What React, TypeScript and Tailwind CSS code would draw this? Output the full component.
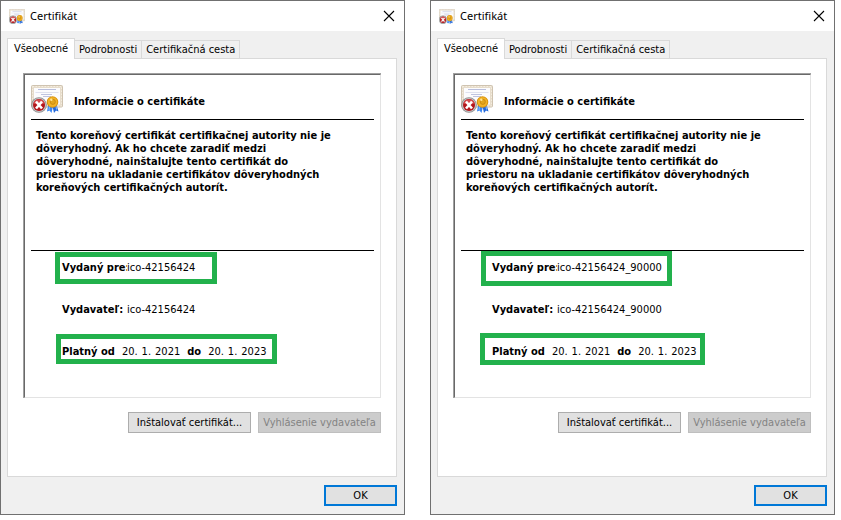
type Certificate = {
  id: string
  name: string
  issuedMark: string
  validMark: string
}

const certificates: Certificate[] = [
  {
    id: 'left',
    name: 'ico-42156424',
    issuedMark: '-left-[7px] -top-[9px] h-8 w-[162px]',
    validMark: '-left-[6px] -top-[11px] h-[30px] w-[221px]',
  },
  {
    id: 'right',
    name: 'ico-42156424_90000',
    issuedMark: '-left-[11px] -top-[10px] h-[35px] w-[191px]',
    validMark: '-left-3 -top-3 h-8 w-[225px]',
  },
]

const tabs = ['Podrobnosti', 'Certifikačná cesta']

function CertificateIcon({ className }: { className: string }) {
  return (
    <svg viewBox="0 0 32 28" preserveAspectRatio="none" className={className} aria-hidden="true">
      <rect x="0.5" y="0.5" width="31" height="21.500" rx="1" fill="#e6dccb" stroke="#cfc3b0" />
      <rect x="1.500" y="1.500" width="29" height="19.500" fill="none" stroke="#f5eee0" strokeDasharray="1.500 1.500" />
      <rect x="3" y="3" width="26" height="16.500" fill="#fcfcfe" />
      <path d="M7 4.500h18" stroke="#b9bedb" />
      <path d="M4.500 7.500h23" stroke="#dfe1ee" />
      <path d="M10 9.500h11M12 11.500h8" stroke="#bfc4e0" />
      <path d="M17.500 18l-1.500 8.500 2.500-1 2 2.500 2-9z" fill="#3b86f2" />
      <path d="M25 18l2.500 8.500-2.500-1-2 2.500-2-9z" fill="#2468da" />
      <path d="M18.500 21l-0.500 4M25 21l0.500 3.500" stroke="#8fc0ff" />
      <circle cx="21.500" cy="17" r="5.800" fill="#d9930f" />
      <circle cx="21.500" cy="17" r="4.800" fill="#f2b327" />
      <circle cx="21.800" cy="16.800" r="2.600" fill="#e3a51c" stroke="#b87908" strokeWidth="0.6" />
      <circle cx="20.300" cy="14.800" r="1.200" fill="#ffe391" />
      <circle cx="8" cy="20" r="7.800" fill="#8e8e8e" />
      <circle cx="8" cy="20" r="7" fill="#c4c4c4" />
      <circle cx="8" cy="20" r="6" fill="#b3161b" />
      <path d="M2.500 18.500a5.700 5.700 0 0 1 11 0q-5.500 2-11 0z" fill="#d4494c" />
      <path d="M5 16.500l6 7M11 16.500l-6 7" stroke="#fff" strokeWidth="2.600" />
    </svg>
  )
}

function DateParts({ parts }: { parts: string[] }) {
  return (
    <dd className="flex gap-1">
      {parts.map((part) => (
        <span key={part}>{part}</span>
      ))}
    </dd>
  )
}

function CertificateDialog({ cert }: { cert: Certificate }) {
  return (
    <section className="min-w-0 flex-1 border border-[#707070] bg-[#f0f0f0]">
      {/* Title bar */}
      <header className="flex h-[30px] items-center bg-white pr-[9px] pl-2">
        <CertificateIcon className="h-[15px] w-4" />
        <h1 className="ml-[5px] flex-1 font-['Noto_Sans',sans-serif] text-[11px] leading-4">Certifikát</h1>
        <button type="button" aria-label="Zavrieť">
          <svg viewBox="0 0 12 12" className="h-3 w-3" aria-hidden="true">
            <path d="M1 1l10 10M11 1L1 11" stroke="#000" strokeWidth="1.1" />
          </svg>
        </button>
      </header>

      <div className="pt-[7px] pr-[7px] pb-2 pl-[6px]">
        {/* Tabs */}
        <div role="tablist" className="flex items-end">
          <button
            type="button"
            role="tab"
            aria-selected="true"
            className="relative z-10 -mb-px h-[21px] w-[68px] border border-b-0 border-[#d9d9d9] bg-white pb-px"
          >
            Všeobecné
          </button>
          {tabs.map((tab) => (
            <button
              key={tab}
              type="button"
              role="tab"
              aria-selected="false"
              className="h-[18px] border-t border-r border-[#d9d9d9] px-1"
            >
              {tab}
            </button>
          ))}
        </div>

        <div className="border border-[#d9d9d9] bg-white px-[15px] pt-[14px] pb-[43px]">
          {/* Certificate sheet */}
          <div className="border-t border-l border-t-[#a0a0a0] border-l-[#a0a0a0]">
            <div className="border border-t-[#696969] border-r-[#e3e3e3] border-b-[#e3e3e3] border-l-[#696969] pr-[6px] pb-[38px] pl-[6px]">
              <div className="flex h-[45px] items-center border-b border-black pt-1">
                <CertificateIcon className="h-7 w-8" />
                <h2 className="ml-[11px] pt-[6px] font-bold">Informácie o certifikáte</h2>
              </div>
              <div className="h-[131px] border-b border-black pt-[9px] pl-[5px]">
                <p className="max-w-[305px] leading-[13px] font-bold">
                  Tento koreňový certifikát certifikačnej autority nie je dôveryhodný. Ak ho chcete zaradiť medzi
                  dôveryhodné, nainštalujte tento certifikát do priestoru na ukladanie certifikátov dôveryhodných
                  koreňových certifikačných autorít.
                </p>
              </div>

              <dl className="flex flex-col gap-7 pt-[10px] pl-[31px] whitespace-nowrap">
                <div className="relative flex">
                  <dt className="w-[65px] font-bold">Vydaný pre:</dt>
                  <dd className="relative bg-white">{cert.name}</dd>
                  <span className={`absolute border-[5px] border-[#22b14c] ${cert.issuedMark}`} />
                </div>
                <div className="flex">
                  <dt className="w-[65px] font-bold">Vydavateľ:</dt>
                  <dd>{cert.name}</dd>
                </div>
                <div className="relative flex gap-[7px]">
                  <dt className="font-bold">Platný od</dt>
                  <DateParts parts={['20.', '1.', '2021']} />
                  <dt className="font-bold">do</dt>
                  <DateParts parts={['20.', '1.', '2023']} />
                  <span className={`absolute border-[5px] border-[#22b14c] ${cert.validMark}`} />
                </div>
              </dl>
            </div>
          </div>

          <div className="mt-[14px] flex justify-end gap-[7px]">
            <button type="button" className="h-[21px] w-[123px] border border-[#adadad] bg-[#e1e1e1]">
              Inštalovať certifikát...
            </button>
            <button
              type="button"
              disabled
              className="h-[21px] w-[123px] border border-[#bfbfbf] bg-[#ccc] text-[#838383]"
            >
              Vyhlásenie vydavateľa
            </button>
          </div>
        </div>

        <div className="mt-2 flex justify-end">
          <button type="button" className="h-[21px] w-[73px] border-2 border-[#0078d7] bg-[#e1e1e1]">
            OK
          </button>
        </div>
      </div>
    </section>
  )
}

export default function App() {
  return (
    <main className="flex items-start gap-[25px] bg-white pr-[6px] font-['DejaVu_Sans_Condensed','DejaVu_Sans',sans-serif] text-[11px] leading-[14px] text-black">
      {certificates.map((cert) => (
        <CertificateDialog key={cert.id} cert={cert} />
      ))}
    </main>
  )
}
